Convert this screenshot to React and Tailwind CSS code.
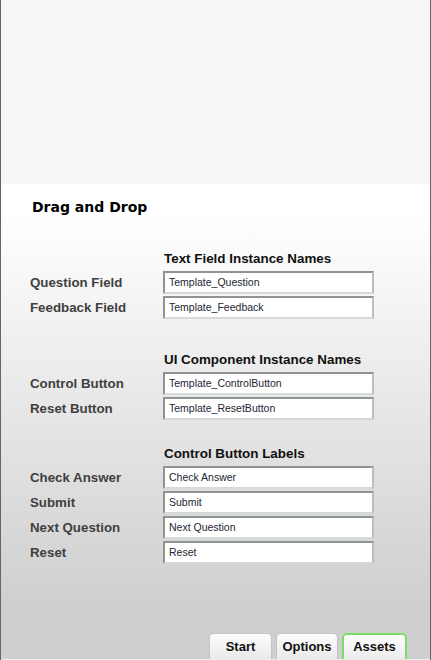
import React from "react";

const groups = [
  {
    title: "Text Field Instance Names",
    mt: "mt-[35px]",
    rows: [
      ["Question Field", "Template_Question"],
      ["Feedback Field", "Template_Feedback"],
    ],
  },
  {
    title: "UI Component Instance Names",
    mt: "mt-[33px]",
    rows: [
      ["Control Button", "Template_ControlButton"],
      ["Reset Button", "Template_ResetButton"],
    ],
  },
  {
    title: "Control Button Labels",
    mt: "mt-[26px]",
    rows: [
      ["Check Answer", "Check Answer"],
      ["Submit", "Submit"],
      ["Next Question", "Next Question"],
      ["Reset", "Reset"],
    ],
  },
];

function Field({ value }) {
  return (
    <div className="w-[211px] h-[23px] border-2 border-t-[#8f9393] border-l-[#8f9393] border-r-[#b9bfbf] border-b-[#d4d9d9] bg-white flex items-center pl-[4px] text-[10.5px] text-[#1b2633] leading-none">
      {value}
    </div>
  );
}

function Tab({ label, active, w }) {
  return (
    <div
      className={
        "h-[26px] rounded-t-[5px] flex items-center justify-center text-[13px] font-bold text-[#111] " +
        w +
        (active
          ? " border-2 border-b-0 border-[#7ade66] bg-gradient-to-b from-[#ffffff] to-[#ececec] shadow-[0_0_1px_#b6f0a8]"
          : " border border-b-0 border-[#c4c4c4] bg-gradient-to-b from-[#fdfdfd] to-[#e9e9e9] shadow-[inset_0_1px_0_#ffffff]")
      }
    >
      {label}
    </div>
  );
}

export default function App() {
  return (
    <div
      className="w-[431px] h-[660px] flex flex-col border-l border-r border-[#666666] overflow-hidden"
      style={{ fontFamily: '"Liberation Sans", Arial, sans-serif' }}
    >
      <div className="h-[184px] bg-[#f7f7f7] shrink-0" />
      <div className="flex-1 flex flex-col bg-[linear-gradient(to_bottom,#ffffff_0px,#ffffff_30px,#cfcfcf_420px,#cfcfcf_100%)] border-b border-[#eeeeee]">
        <div
          className="mt-[15px] pl-[31px] text-[14px] leading-[17px] font-bold text-black"
          style={{ fontFamily: '"DejaVu Sans", Verdana, sans-serif' }}
        >
          Drag and Drop
        </div>
        {groups.map((g) => (
          <div key={g.title} className={"flex flex-col " + g.mt}>
            <div className="pl-[163px] text-[13.4px] leading-[16px] font-bold text-[#111]">
              {g.title}
            </div>
            <div className="flex flex-col gap-[2px] mt-[4px]">
              {g.rows.map(([label, value]) => (
                <div key={label} className="flex items-center">
                  <div className="w-[162px] pl-[29px] text-[13.3px] font-bold text-[#404040] leading-none">
                    {label}
                  </div>
                  <Field value={value} />
                </div>
              ))}
            </div>
          </div>
        ))}
        <div className="mt-auto flex justify-end gap-[4px] pr-[23px]">
          <Tab label="Start" w="w-[63px]" />
          <Tab label="Options" w="w-[62px]" />
          <Tab label="Assets" w="w-[65px]" active />
        </div>
      </div>
    </div>
  );
}
